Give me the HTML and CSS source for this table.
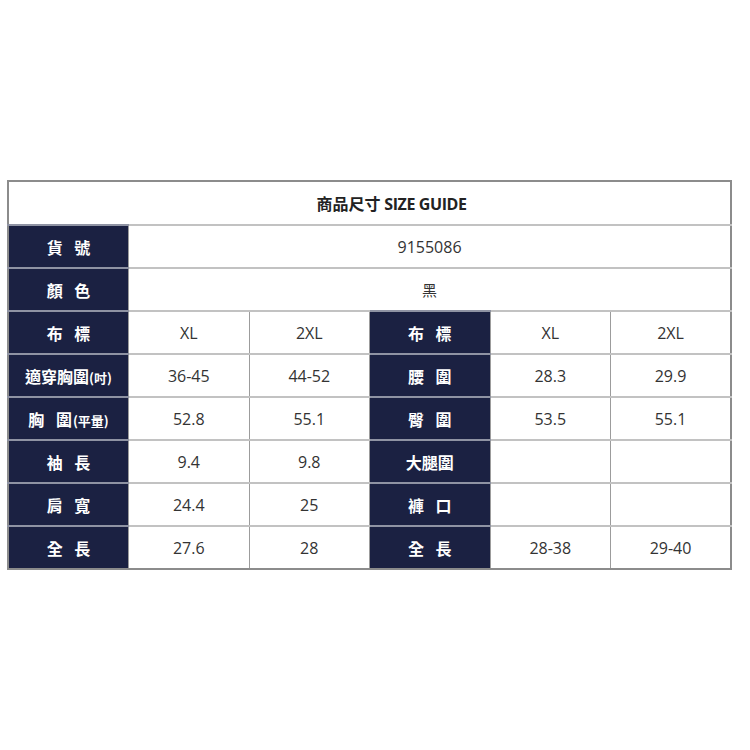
FILE: index.html
```html
<!DOCTYPE html>
<html lang="zh-Hant">
<head>
<meta charset="utf-8">
<title>商品尺寸 SIZE GUIDE</title>
<link rel="stylesheet" href="styles.css">
</head>
<body>
<div class="page">
<table class="size">
  <colgroup>
    <col class="c"><col class="c"><col class="c"><col class="c"><col class="c"><col class="c">
  </colgroup>
  <tr class="title-row"><td colspan="6" class="title"><span class="cjk">商品尺寸</span> SIZE GUIDE</td></tr>
  <tr><th><span class="lbl">貨 號</span></th><td colspan="5">9155086</td></tr>
  <tr><th><span class="lbl">顏 色</span></th><td colspan="5" class="cjkv">黑</td></tr>
  <tr><th><span class="lbl">布 標</span></th><td>XL</td><td>2XL</td><th><span class="lbl">布 標</span></th><td>XL</td><td>2XL</td></tr>
  <tr><th>適穿胸圍<span class="sm">(吋)</span></th><td>36-45</td><td>44-52</td><th><span class="lbl">腰 圍</span></th><td>28.3</td><td>29.9</td></tr>
  <tr><th><span class="lbl">胸 圍</span><span class="sm">(平量)</span></th><td>52.8</td><td>55.1</td><th><span class="lbl">臀 圍</span></th><td>53.5</td><td>55.1</td></tr>
  <tr><th><span class="lbl">袖 長</span></th><td>9.4</td><td>9.8</td><th>大腿圍</th><td></td><td></td></tr>
  <tr><th><span class="lbl">肩 寬</span></th><td>24.4</td><td>25</td><th><span class="lbl">褲 口</span></th><td></td><td></td></tr>
  <tr><th><span class="lbl">全 長</span></th><td>27.6</td><td>28</td><th><span class="lbl">全 長</span></th><td>28-38</td><td>29-40</td></tr>
</table>
</div>
</body>
</html>
```
FILE: styles.css
```css
html, body {
  margin: 0;
  padding: 0;
  background: #ffffff;
}
.page {
  padding: 180px 0 0 7px;
}
.size {
  width: 725px;
  table-layout: fixed;
  border-collapse: collapse;
  border: 2px solid #8c8c8c;
  font-family: "Open Sans", "Noto Sans CJK TC", sans-serif;
  font-size: 16px;
  color: #333333;
}
.size col.c {
  width: 120.5px;
}
.size tr {
  height: 43px;
}
.size tr.title-row {
  height: 44px;
}
.size td, .size th {
  padding: 0;
  text-align: center;
  vertical-align: middle;
  border-top: 2px solid #c2c2c2;
  border-left: 1px solid #9c9c9c;
  border-right: 1px solid #9c9c9c;
}
.size td.title {
  border-top: none;
  padding-left: 44px;
  font-weight: 700;
  font-size: 16px;
  color: #222222;
  letter-spacing: -0.4px;
}
.size td.title .cjk {
  font-family: "Noto Sans CJK TC", sans-serif;
  letter-spacing: 0;
}
.size td.cjkv {
  font-family: "Noto Sans CJK TC", sans-serif;
  font-size: 15px;
}
.size th {
  background: #1b2142;
  color: #ffffff;
  font-family: "Noto Sans CJK TC", sans-serif;
  font-weight: 700;
  font-size: 16px;
  white-space: nowrap;
  border-top: 2px solid #8f93a3;
}
.size th .lbl {
  word-spacing: 8px;
}
.size th .lbl + .sm {
  margin-left: 1px;
}
.size th .sm {
  font-size: 13px;
}
```
